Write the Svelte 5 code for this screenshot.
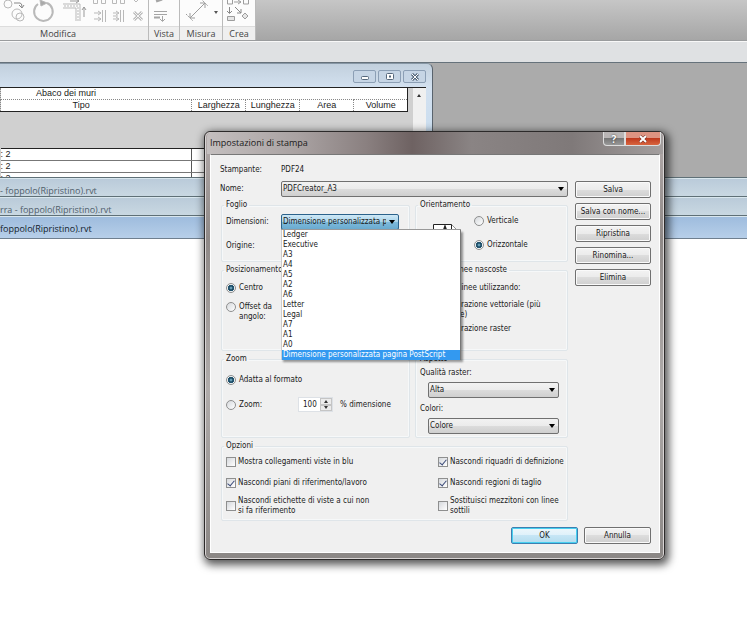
<script lang="ts">
  const sizes = [
    'Ledger', 'Executive', 'A3', 'A4', 'A5', 'A2', 'A6', 'Letter', 'Legal',
    'A7', 'A1', 'A0', 'Dimensione personalizzata pagina PostScript',
  ];

  let size = $state(sizes[12]);
  let listOpen = $state(true);
  let orientation = $state('horizontal');
  let placement = $state('center');
  let zoomMode = $state('fit');
  let zoom = $state(100);
  let processing = $state('vector');

  const options = $state([
    { label: 'Mostra collegamenti viste in blu', on: false },
    { label: 'Nascondi riquadri di definizione', on: true },
    { label: 'Nascondi piani di riferimento/lavoro', on: true },
    { label: 'Nascondi regioni di taglio', on: true },
    { label: 'Nascondi etichette di viste a cui non si fa riferimento', on: false },
    { label: 'Sostituisci mezzitoni con linee sottili', on: false },
  ]);

  const sideButtons = ['Salva', 'Salva con nome...', 'Ripristina', 'Rinomina...', 'Elimina'];

  function toggleList(e: MouseEvent) {
    e.preventDefault();
    listOpen = !listOpen;
  }

  function pick(s: string) {
    size = s;
    listOpen = false;
  }
</script>

<div class="app">
  <!-- Ribbon -->
  <header class="ribbon">
    <section class="panel modify">
      <svg width="148" height="26" viewBox="0 0 148 26" fill="none" stroke="#b9b9b9">
        <circle cx="8" cy="4" r="4" />
        <path d="M14 3h6q2 0 2 4M19 5l3 3 2-3" stroke="#888" />
        <circle cx="17" cy="14" r="5" />
        <circle cx="20" cy="17" r="4" />
        <path d="M38 4a9.300 9.300 0 1 0 9-1" stroke-width="2" />
        <path d="M40 0l7 3-6 3z" fill="#aaa" />
        <path d="M63 4h17v17M63 8h13v13" />
        <path d="M64 6h14v15" stroke-dasharray="2 1" />
        <path d="M70 1h9M76-1l3 2-3 2M84 17V7M82 10l2-3 2 3" stroke="#999" />
        <path d="M93.500 0v3.500h4V0M101.500 0v3.500h4V0M112.500 0v3.500h4V0M120.500 0v3.500h4V0M134 0l2 2 2-2" />
        <path d="M94 13h7M98 11l3 2-3 2M94 19h7M98 17l3 2-3 2M102.500 10v12M105.500 10v12" />
        <path d="M113 13h6M116 11l3 2-3 2M113 19h6M116 17l3 2-3 2M120.500 10v12M123.500 10v12M113 16h5" />
        <path d="M134 12l8 8M142 12l-8 8" stroke-width="3" />
        <path d="M134 12l8 8M142 12l-8 8" stroke="#f4f4f4" />
      </svg>
      <h2>Modifica</h2>
    </section>
    <section class="panel view">
      <svg width="30" height="26" viewBox="0 0 30 26" fill="none" stroke="#a5a5a5">
        <path d="M7 1l6-2" stroke-width="3" />
        <path d="M5 11.500h13M5 14.500h13" />
        <path d="M5 17.500h6" stroke-width="2" />
        <path d="M13.500 16v5M11 19l2.500 2.500L16 19" />
      </svg>
      <h2>Vista</h2>
    </section>
    <section class="panel measure">
      <svg width="42" height="26" viewBox="0 0 42 26" fill="none" stroke="#9d9d9d">
        <path d="M10 18L25 3M10 13v5h5M20 3h5v5" />
        <path d="M6 14l7 7M21-1l7 7" stroke-dasharray="2 1" />
        <path d="M34 11h4l-2 3z" fill="#555" stroke="none" />
      </svg>
      <h2>Misura</h2>
    </section>
    <section class="panel create">
      <svg width="32" height="26" viewBox="0 0 32 26" fill="none" stroke="#9d9d9d">
        <path d="M4.500-1v5h5v-5M20.500-1v5h5v-5M11 2h7M15 0l3 2-3 2" />
        <path d="M6.500 7v6M4 11l2.500 2.500L9 11M12 7l6 6M14 13h4V9" stroke="#888" />
        <path d="M4.500 16.500h7v4h-7zM22 13l3 3-3 3-3-3z" fill="#e6e6e6" />
      </svg>
      <h2>Crea</h2>
    </section>
  </header>
  <div class="options-bar"></div>

  <!-- Drawing area with the open project windows -->
  <main class="workspace">
    <div class="mdi">
      <section class="schedule">
        <div class="schedule-bar">
          <button aria-label="Riduci">
            <svg width="12" height="10" fill="none" stroke="#56687c"><rect x="2.500" y="4.500" width="7" height="3" rx="1" fill="#fff" /></svg>
          </button>
          <button aria-label="Ingrandisci">
            <svg width="12" height="10" fill="none" stroke="#56687c"><rect x="2.500" y="1.500" width="7" height="6" rx="1" fill="#fff" /><path d="M5 4.500h2" stroke-width="2" /></svg>
          </button>
          <button aria-label="Chiudi finestra">
            <svg width="12" height="10" fill="none"><path d="M3 2l6 6M9 2l-6 6" stroke="#56687c" stroke-width="3" /><path d="M3 2l6 6M9 2l-6 6" stroke="#fff" /></svg>
          </button>
        </div>
        <div class="schedule-body">
          <div class="sheet">
            <table>
              <colgroup>
                <col />
                <col class="num" span="4" />
              </colgroup>
              <thead>
                <tr class="caption"><th colspan="5">Abaco dei muri</th></tr>
                <tr>
                  <th class="type">Tipo</th>
                  <th>Larghezza</th>
                  <th>Lunghezza</th>
                  <th>Area</th>
                  <th>Volume</th>
                </tr>
              </thead>
              <tbody>
                <tr class="blank"><td colspan="5"></td></tr>
                {#each [1, 2, 3] as row (row)}
                  <tr class="data"><td>: 2</td><td></td><td></td><td></td><td></td></tr>
                {/each}
              </tbody>
            </table>
          </div>
          <div class="scroll"><span class="arrow-up"></span></div>
        </div>
      </section>
    </div>
    <div class="child-title">- foppolo(Ripristino).rvt</div>
    <div class="child-title">rra - foppolo(Ripristino).rvt</div>
    <div class="child-title active">foppolo(Ripristino).rvt</div>
  </main>

  <!-- Print setup dialog -->
  <div class="dialog" role="dialog" aria-labelledby="dlg-title">
    <div class="dialog-bar">
      <h1 id="dlg-title">Impostazioni di stampa</h1>
      <div class="caption-buttons">
        <button class="help" aria-label="Guida">?</button>
        <button class="close" aria-label="Chiudi">
          <svg width="10" height="8"><path d="M2 1l6 6M8 1L2 7" stroke="#6b2a20" stroke-width="3" /><path d="M2 1l6 6M8 1L2 7" stroke="#fff" stroke-width="2" /></svg>
        </button>
      </div>
    </div>

    <form class="dialog-body" onsubmit={(e) => e.preventDefault()}>
      <div class="content">
        <div class="main">
          <div class="field">
            <span>Stampante:</span>
            <span>PDF24</span>
          </div>
          <div class="field">
            <label for="name">Nome:</label>
            <span class="combo"><select id="name"><option>PDFCreator_A3</option></select></span>
          </div>

          <div class="groups">
            <fieldset>
              <legend>Foglio</legend>
              <div class="paper">
                <label for="size">Dimensioni:</label>
                <span class="combo hot">
                  <select id="size" bind:value={size} onmousedown={toggleList}>
                    {#each sizes as s (s)}
                      <option>{s}</option>
                    {/each}
                  </select>
                  {#if listOpen}
                    <ul class="list" role="listbox" aria-label="Dimensioni">
                      {#each sizes as s (s)}
                        <li role="option" aria-selected={s === size}>
                          <button type="button" class:selected={s === size} onclick={() => pick(s)}>{s}</button>
                        </li>
                      {/each}
                    </ul>
                  {/if}
                </span>
                <label for="source">Origine:</label>
                <span class="combo"><select id="source"></select></span>
              </div>
            </fieldset>

            <fieldset>
              <legend>Orientamento</legend>
              <div class="orientation">
                <svg width="26" height="22" viewBox="0 0 26 22" fill="#fff" stroke="#222">
                  <path d="M.500 20V.500h18l6 6V20z" />
                  <path d="M18.500.500v6h6" />
                  <path d="M8 14l4-11 4 11M9 10h6" fill="none" stroke-width="2" />
                </svg>
                <div class="stack">
                  <label><input type="radio" value="vertical" bind:group={orientation} />Verticale</label>
                  <label><input type="radio" value="horizontal" bind:group={orientation} />Orizzontale</label>
                </div>
              </div>
            </fieldset>

            <fieldset>
              <legend>Posizionamento</legend>
              <div class="placement">
                <label><input type="radio" value="center" bind:group={placement} />Centro</label>
                <label><input type="radio" value="offset" bind:group={placement} /><span>Offset da<br />angolo:</span></label>
              </div>
            </fieldset>

            <fieldset>
              <legend>Viste con linee nascoste</legend>
              <div class="hidden-lines">
                <p>Rimuovi linee utilizzando:</p>
                <label><input type="radio" value="vector" bind:group={processing} /><span>Elaborazione vettoriale (più<br />veloce)</span></label>
                <label><input type="radio" value="raster" bind:group={processing} />Elaborazione raster</label>
              </div>
            </fieldset>

            <fieldset>
              <legend>Zoom</legend>
              <div class="zoom">
                <label><input type="radio" value="fit" bind:group={zoomMode} />Adatta al formato</label>
                <div class="zoom-row">
                  <label><input type="radio" value="zoom" bind:group={zoomMode} />Zoom:</label>
                  <span class="spinner">
                    <input id="zoom" type="number" bind:value={zoom} />
                    <span class="steps">
                      <button type="button" aria-label="Aumenta" onclick={() => zoom++}><span class="arrow-up"></span></button>
                      <button type="button" aria-label="Riduci" onclick={() => zoom--}><span class="arrow-down"></span></button>
                    </span>
                  </span>
                  <label for="zoom">% dimensione</label>
                </div>
              </div>
            </fieldset>

            <fieldset>
              <legend>Aspetto</legend>
              <div class="look">
                <label for="quality">Qualità raster:</label>
                <span class="combo"><select id="quality"><option>Alta</option></select></span>
                <label for="colors">Colori:</label>
                <span class="combo"><select id="colors"><option>Colore</option></select></span>
              </div>
            </fieldset>

            <fieldset class="wide">
              <legend>Opzioni</legend>
              <div class="options">
                {#each options as opt (opt.label)}
                  <label><input type="checkbox" bind:checked={opt.on} /><span>{opt.label}</span></label>
                {/each}
              </div>
            </fieldset>
          </div>
        </div>

        <div class="side">
          {#each sideButtons as b (b)}
            <button type="button" class="btn">{b}</button>
          {/each}
        </div>
      </div>

      <div class="footer">
        <button class="btn default">OK</button>
        <button type="button" class="btn">Annulla</button>
      </div>
    </form>
  </div>
</div>

<style>
  :global(body) {
    margin: 0;
    background: #fff;
  }

  .app {
    position: relative;
    min-height: 100vh;
    overflow: hidden;
    background: #fff;
    color: #1a1a1a;
    font: 8px/10px 'DejaVu Sans Condensed', 'Open Sans', sans-serif;
  }

  .app :global(*) {
    box-sizing: border-box;
  }

  button,
  input,
  select {
    margin: 0;
    padding: 0;
    font: inherit;
    color: inherit;
  }

  h1,
  h2,
  p,
  ul {
    margin: 0;
    padding: 0;
    font-weight: normal;
    list-style: none;
  }

  svg {
    display: block;
  }

  /* Ribbon */
  .ribbon {
    display: flex;
    height: 41px;
    background: linear-gradient(#c6c6c6, #a6a6a6);
    border-bottom: 1px solid #9a9c9e;
  }

  .panel {
    background: #fcfcfc;
    border-right: 1px solid #bbb;
  }

  .panel h2 {
    height: 14px;
    background: #efefef;
    border-top: 1px solid #ddd;
    color: #444;
    font: 9px/14px 'Open Sans', sans-serif;
    text-align: center;
  }

  .modify h2 {
    padding-right: 32px;
  }

  .options-bar {
    height: 22px;
    background: #dfe1e3;
    border-top: 1px solid #f8f8f8;
    border-bottom: 1px solid #66727b;
  }

  /* Project windows */
  .mdi {
    height: 114px;
    overflow: hidden;
    background: #ababab;
  }

  .schedule {
    display: flex;
    flex-direction: column;
    width: 58%;
    height: 140px;
    padding-right: 6px;
    background: linear-gradient(#c2d0dd, #d3e1f0 24px, #bdd7ec);
    border: 1px solid #59636d;
    border-left: 0;
    border-top-color: #8797a5;
    border-radius: 0 6px 0 0;
  }

  .schedule-bar {
    display: flex;
    justify-content: flex-end;
    align-items: center;
    gap: 2px;
    height: 23px;
    padding-top: 2px;
    flex-shrink: 0;
  }

  .schedule-bar button {
    display: grid;
    place-items: center;
    width: 23px;
    height: 13px;
    background: #c6d5e5;
    border: 1px solid #8c9fb5;
    border-radius: 2px;
  }

  .schedule-body {
    display: flex;
    flex: 1;
    background: #d0d0d0;
    border-top: 1px solid #222;
  }

  .sheet {
    flex: 1;
    overflow: hidden;
    margin-right: 5px;
  }

  table {
    width: 100%;
    table-layout: fixed;
    border-collapse: collapse;
    font: 9px/10px 'Liberation Sans', sans-serif;
  }

  .num {
    width: 54px;
  }

  th {
    height: 12px;
    padding: 0;
    background: #fff;
    border: 1px dotted #888;
    border-bottom: 1px solid #222;
    font-weight: normal;
  }

  th:last-child {
    border-right: 1px solid #222;
  }

  .type {
    padding-right: 30px;
  }

  .caption th {
    height: 11px;
    padding-left: 35px;
    border-top: 0;
    border-bottom: 1px dotted #888;
    text-align: left;
  }

  .blank td {
    height: 37px;
    background: #d0d0d0;
    border-bottom: 1px solid #222;
  }

  .data td {
    height: 12px;
    padding: 0;
    background: #fff;
    border-right: 1px solid #555;
    border-bottom: 1px solid #777;
  }

  .scroll {
    width: 13px;
    padding: 6px 4px;
    background: #f0f0f0;
  }

  .arrow-up,
  .arrow-down {
    display: block;
    width: 0;
    height: 0;
    border: 2px solid transparent;
    border-top: 0;
    border-bottom: 3px solid #333;
  }

  .arrow-down {
    border-top: 3px solid #333;
    border-bottom: 0;
  }

  .child-title {
    height: 19px;
    background: linear-gradient(#b9cad9, #c9d8e2);
    border-top: 1px solid #5f7077;
    box-shadow: inset 0 1px #d9e7ee;
    color: #50606c;
    font: 9px/26px 'Open Sans', sans-serif;
    white-space: nowrap;
  }

  .child-title.active {
    height: 24px;
    background: linear-gradient(#9dbbdd, #b7cfe9);
    border-bottom: 1px solid #6f7f8f;
    color: #111c2c;
  }

  /* Dialog */
  .dialog {
    position: absolute;
    top: 131px;
    left: 204px;
    width: 461px;
    padding: 0 4px 6px 5px;
    background: linear-gradient(#b3abab, #8f8987 25%, #b0acab 60%, #8b8785);
    border: 1px solid #2c2a2a;
    border-radius: 6px;
    box-shadow: inset 0 0 0 1px #d8d4d4, 2px 3px 8px 2px rgba(0, 0, 0, 0.65);
  }

  .dialog-bar {
    display: flex;
    justify-content: space-between;
    height: 22px;
    margin: 0 -3px;
    background: linear-gradient(90deg, #c4bfbf, #a9a2a2 20%, #8a8080 35%, #6e6262 45%, #8a8484 58%, #7f7979 80%, #a39e9e);
    border-radius: 5px 5px 0 0;
  }

  h1 {
    padding-left: 3px;
    font: 9px/22px 'Open Sans', sans-serif;
  }

  .caption-buttons {
    display: flex;
    height: 14px;
    margin-right: 2px;
  }

  .caption-buttons button {
    display: grid;
    place-items: center;
    width: 22px;
    border: 1px solid #ddd;
    border-top: 0;
    border-radius: 0 0 0 4px;
    background: linear-gradient(#b9b5b5 45%, #777 50%, #999);
    color: #fff;
    font: bold 10px/12px 'Open Sans', sans-serif;
    text-shadow: 0 0 2px #222;
  }

  .caption-buttons .close {
    width: 36px;
    border-radius: 0 0 4px 0;
    background: linear-gradient(#dd9482 45%, #bf3a1e 50%, #d8653f);
  }

  .dialog-body {
    padding: 9px 8px 8px 9px;
    background: #f0f0f0;
    border: 1px solid #fff;
    border-top-color: #777;
  }

  .content {
    display: grid;
    grid-template-columns: 1fr 76px;
    gap: 7px;
  }

  .field {
    display: grid;
    grid-template-columns: 61px 1fr;
    align-items: center;
    height: 12px;
    margin-bottom: 5px;
  }

  .field + .field {
    height: 16px;
    margin-bottom: 3px;
  }

  .combo {
    position: relative;
    display: block;
  }

  .combo::after {
    content: '';
    position: absolute;
    top: 6px;
    right: 4px;
    border: 3px solid transparent;
    border-top: 4px solid #000;
    border-bottom: 0;
    pointer-events: none;
  }

  select {
    appearance: none;
    display: block;
    width: 100%;
    height: 16px;
    padding: 0 12px 0 1px;
    background: linear-gradient(#f2f2f2, #ebebeb 50%, #dcdcdc 50%, #cfcfcf);
    border: 1px solid #707070;
    border-radius: 2px;
    outline: none;
  }

  .hot select {
    background: linear-gradient(#cfe8f6, #a8d3ea 50%, #7ebadb 50%, #6aabd0);
    border-color: #2c628b;
  }

  .list {
    position: absolute;
    top: 16px;
    left: 0;
    z-index: 1;
    width: 180px;
    background: #fff;
    border: solid #777;
    border-width: 0 1px;
    border-left-color: #ccc;
    box-shadow: 0 -1px #999, 2px 2px 2px rgba(0, 0, 0, 0.4);
  }

  .list button {
    display: block;
    width: 100%;
    height: 10px;
    padding-left: 1px;
    background: none;
    border: 0;
    text-align: left;
    white-space: nowrap;
  }

  .list .selected {
    background: #3399f0;
    color: #fff;
  }

  .groups {
    display: grid;
    grid-template-columns: 189px 1fr;
    grid-template-rows: 62px 86px 84px 80px;
    gap: 3px 5px;
    padding-left: 1px;
  }

  fieldset {
    min-width: 0;
    margin: 0;
    padding: 0 0 0 4px;
    border: 1px solid #dfe5e9;
    border-radius: 2px;
    box-shadow: inset 0 0 0 1px #f6f8f9;
  }

  legend {
    margin-left: -2px;
    padding: 0 2px;
  }

  .wide {
    grid-column: 1 / -1;
  }

  label {
    white-space: nowrap;
  }

  label:has(input) {
    display: flex;
    gap: 3px;
  }

  .paper {
    display: grid;
    grid-template-columns: 55px 118px;
    align-items: center;
    gap: 8px 0;
    padding-top: 4px;
  }

  .orientation {
    display: flex;
    gap: 15px;
    padding: 6px 0 0 13px;
  }

  .orientation svg {
    margin-top: 8px;
  }

  .stack {
    display: grid;
    gap: 14px;
  }

  .placement {
    display: grid;
    gap: 9px;
    padding-top: 8px;
  }

  .hidden-lines {
    display: grid;
    gap: 4px;
    padding: 8px 0 0 8px;
  }

  .hidden-lines p {
    margin-bottom: 3px;
  }

  .zoom {
    display: grid;
    gap: 12px;
    padding-top: 11px;
  }

  .zoom-row {
    display: grid;
    grid-template-columns: 72px 35px auto;
    align-items: center;
    justify-content: start;
  }

  .zoom-row label:last-child {
    padding-left: 7px;
  }

  .spinner {
    display: flex;
    height: 15px;
    background: #fff;
    border: 1px solid #dde1e6;
  }

  .spinner input {
    flex: 1;
    min-width: 0;
    padding-left: 4px;
    border: 0;
    background: none;
    appearance: textfield;
    outline: none;
  }

  .spinner input::-webkit-inner-spin-button {
    display: none;
  }

  .steps {
    display: grid;
    width: 12px;
  }

  .steps button {
    display: grid;
    place-items: center;
    min-height: 0;
    background: #ececec;
    border: 1px solid #c5c5c5;
  }

  .look {
    display: grid;
    grid-template-rows: 10px 16px 12px 16px;
    gap: 4px;
    padding: 4px 8px 0 0;
  }

  .look label {
    align-self: end;
  }

  .look .combo {
    margin-left: 8px;
  }

  .options {
    display: grid;
    grid-template-columns: 212px 1fr;
    grid-template-rows: 22px 20px 26px;
    align-items: center;
  }

  .options label {
    align-items: center;
    white-space: normal;
    gap: 2px;
  }

  .options label span {
    max-width: 135px;
  }

  input[type='radio'],
  input[type='checkbox'] {
    appearance: none;
    flex-shrink: 0;
    width: 10px;
    height: 10px;
    background: linear-gradient(135deg, #d5d8dc, #fff);
    border: 1px solid #8e8f8f;
    outline: none;
  }

  input[type='radio'] {
    border-radius: 50%;
  }

  input[type='radio']:checked {
    background: radial-gradient(circle, #8cd0e8, #17425c 2px, #2b5f7a 3px, #f4f4f4 3px);
  }

  input[type='checkbox']:checked::after {
    content: '';
    display: block;
    width: 3px;
    height: 6px;
    margin: 0 auto;
    border: solid #3a4a78;
    border-width: 0 1px 1px 0;
    transform: rotate(40deg);
  }

  .side {
    display: flex;
    flex-direction: column;
    gap: 5px;
    padding-top: 17px;
  }

  .btn {
    height: 17px;
    background: linear-gradient(#f3f3f3, #ebebeb 50%, #dddddd 50%, #cfcfcf);
    border: 1px solid #707070;
    border-radius: 2px;
    box-shadow: inset 0 0 0 1px #fafafa;
    white-space: nowrap;
  }

  .footer {
    display: flex;
    justify-content: flex-end;
    gap: 6px;
    margin-top: 6px;
  }

  .footer .btn {
    width: 67px;
  }

  .default {
    background: linear-gradient(#eef7fb, #def1fa 50%, #c6e6f5 50%, #b4dcee);
    border-color: #3c7fb1;
    box-shadow: inset 0 0 0 1px #48d0f0;
  }
</style>
